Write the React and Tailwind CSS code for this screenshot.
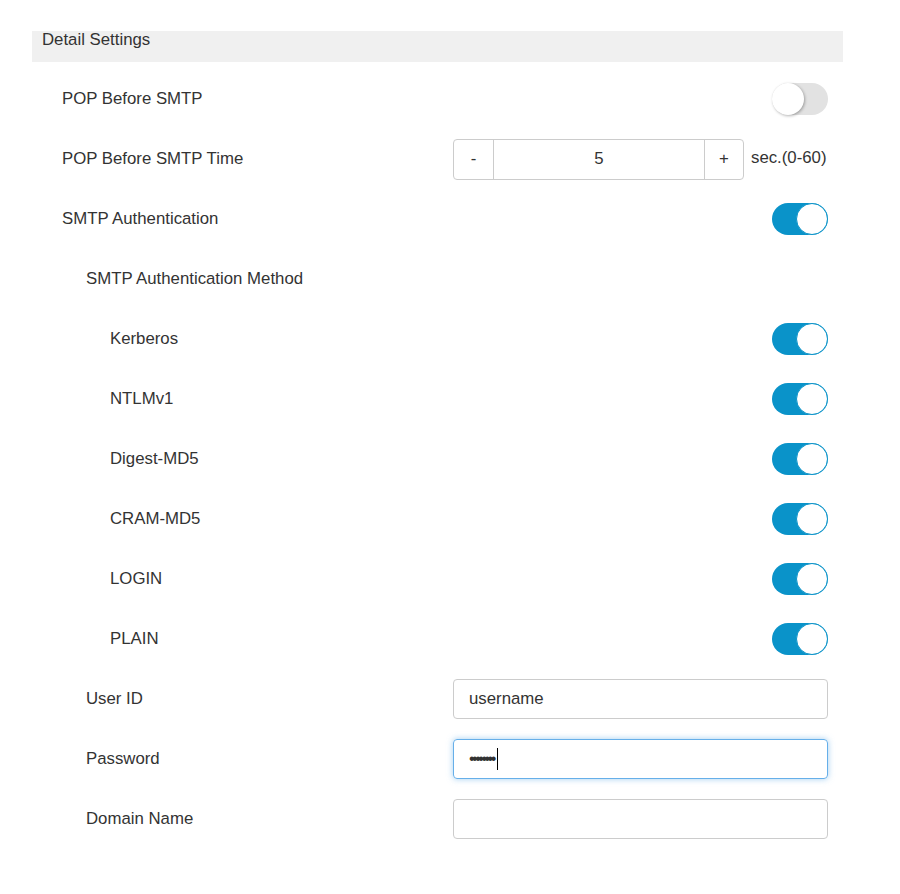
import React from 'react';

const font = { fontFamily: '"Liberation Sans", Arial, sans-serif' };

const Toggle = ({ on }) =>
  on ? (
    <div className="relative w-[56px] h-[32px] rounded-full bg-[#0a93c9]">
      <div className="absolute right-0 top-0 w-[32px] h-[32px] rounded-full bg-white border border-[#0a93c9]" />
    </div>
  ) : (
    <div className="relative w-[56px] h-[32px] rounded-full bg-[#e2e2e2]">
      <div className="absolute left-0 top-0 w-[32px] h-[32px] rounded-full bg-white shadow-[1px_1px_3px_rgba(0,0,0,0.3)]" />
    </div>
  );

const Row = ({ indent, label, children }) => (
  <div className="flex items-center h-[60px] pr-[15px]">
    <div className={`${indent} flex-1 text-[16.8px] text-[#333]`}>{label}</div>
    {children}
  </div>
);

const Field = ({ children, focus }) => (
  <div
    className={`w-[375px] h-[40px] rounded border flex items-center px-[15px] text-[16.8px] text-[#333] ${
      focus ? 'border-[#66afe9] shadow-[0_0_6px_rgba(102,175,233,0.6)]' : 'border-[#ccc]'
    }`}
  >
    {children}
  </div>
);

export default function App() {
  const methods = ['Kerberos', 'NTLMv1', 'Digest-MD5', 'CRAM-MD5', 'LOGIN', 'PLAIN'];
  return (
    <div className="bg-white w-[900px] h-[894px] pt-[31px] pl-[32px]" style={font}>
      <div className="w-[811px]">
        <div className="h-[31px] bg-[#f0f0f0] pl-[10px] text-[16.8px] text-[#333] leading-[18px]">
          Detail Settings
        </div>
        <div className="pt-[7px]">
          <Row indent="pl-[30px]" label="POP Before SMTP">
            <Toggle on={false} />
          </Row>
          <Row indent="pl-[30px]" label="POP Before SMTP Time">
            <div className="flex items-start">
              <div className="flex w-[291px] h-[41px] border border-[#ccc] rounded text-[16.8px] text-[#333]">
                <div className="w-[40px] flex items-center justify-center border-r border-[#ccc]">-</div>
                <div className="flex-1 flex items-center justify-center">5</div>
                <div className="w-[39px] flex items-center justify-center border-l border-[#ccc]">+</div>
              </div>
              <div className="ml-[7px] w-[77px] whitespace-nowrap text-[16.8px] text-[#333] leading-[18px] mt-[10px]">sec.(0-60)</div>
            </div>
          </Row>
          <Row indent="pl-[30px]" label="SMTP Authentication">
            <Toggle on />
          </Row>
          <Row indent="pl-[54px]" label="SMTP Authentication Method" />
          {methods.map((m) => (
            <Row key={m} indent="pl-[78px]" label={m}>
              <Toggle on />
            </Row>
          ))}
          <Row indent="pl-[54px]" label="User ID">
            <Field>username</Field>
          </Row>
          <Row indent="pl-[54px]" label="Password">
            <Field focus>
              <span className="tracking-[-2.5px] text-[16px]">••••••••</span>
              <span className="w-px h-[22px] bg-black ml-[3px]" />
            </Field>
          </Row>
          <Row indent="pl-[54px]" label="Domain Name">
            <Field />
          </Row>
        </div>
      </div>
    </div>
  );
}
